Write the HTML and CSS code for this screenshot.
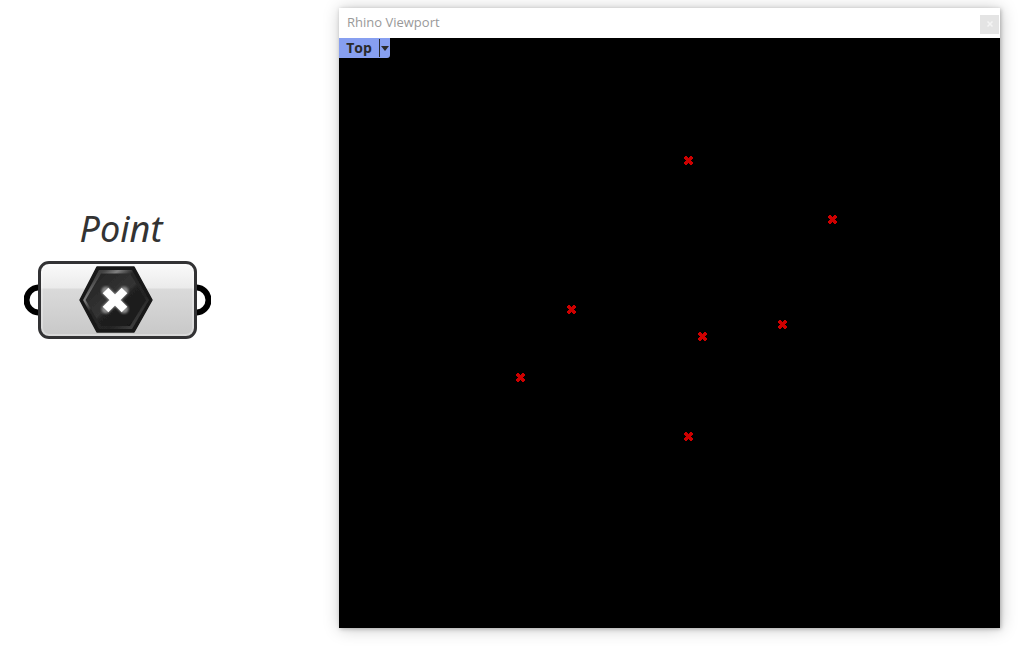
FILE: index.html
```html
<!DOCTYPE html>
<html lang="en">
<head>
<meta charset="utf-8">
<meta name="viewport" content="width=device-width, initial-scale=1">
<title>Point</title>
<link rel="stylesheet" href="styles.css">
</head>
<body>
<main class="workspace">
  <section class="component">
    <h1 class="component-name">Point</h1>
    <div class="component-body">
      <svg class="port" viewBox="0 0 14 32" aria-hidden="true"><path d="M15 3.500A12.500 12.500 0 0 0 15 28.500" fill="none" stroke="#000" stroke-width="6"/></svg>
      <div class="capsule">
        <svg class="hex" viewBox="0 0 74 68" aria-hidden="true">
          <defs>
            <linearGradient id="rim" x1="0" y1="0" x2="1" y2="1">
              <stop offset="0" stop-color="#333"/>
              <stop offset=".17" stop-color="#444"/>
              <stop offset=".27" stop-color="#808080"/>
              <stop offset=".4" stop-color="#262626"/>
              <stop offset=".7" stop-color="#242424"/>
              <stop offset=".88" stop-color="#404040"/>
              <stop offset="1" stop-color="#222"/>
            </linearGradient>
            <linearGradient id="face" x1="0" y1="0" x2="1" y2="1">
              <stop offset="0" stop-color="#222"/>
              <stop offset=".5" stop-color="#343434"/>
              <stop offset=".56" stop-color="#202020"/>
              <stop offset="1" stop-color="#161616"/>
            </linearGradient>
            <filter id="soft" x="-20%" y="-20%" width="140%" height="140%">
              <feGaussianBlur stdDeviation=".7"/>
            </filter>
            <filter id="glow" x="-30%" y="-30%" width="160%" height="160%">
              <feGaussianBlur stdDeviation="1.2"/>
            </filter>
          </defs>
          <path d="M18 1H55L73 34L55 66H18L1 34Z" fill="#181818" stroke="#181818" stroke-width="1.5" stroke-linejoin="round"/>
          <g filter="url(#soft)">
            <path d="M20 4H53L70 34L53 63H20L4 34Z" fill="url(#rim)"/>
            <path d="M22 7.500H51L67 34L51 60H22L6.500 34Z" fill="url(#face)"/>
          </g>
          <path d="M27 25L45 43M45 25L27 43" stroke="#888" stroke-width="9" stroke-linecap="round" filter="url(#glow)"/>
          <path d="M26.500 24.500L45.500 43.500M45.500 24.500L26.500 43.500" stroke="#fff" stroke-width="8" filter="url(#soft)"/>
        </svg>
      </div>
      <svg class="port" viewBox="0 0 14 32" aria-hidden="true"><path d="M-1 3.500A12.500 12.500 0 0 1 -1 28.500" fill="none" stroke="#000" stroke-width="6"/></svg>
    </div>
  </section>
  <section class="window">
    <header class="titlebar">
      <h2 class="window-title">Rhino Viewport</h2>
      <button class="close" type="button" aria-label="Close">
        <svg class="close-icon" viewBox="0 0 6 6" aria-hidden="true"><path d="M.5 .5L5.500 5.500M5.500 .5L.5 5.500" stroke="#f4f4f4" stroke-width="1.500"/></svg>
      </button>
    </header>
    <div class="viewport">
      <svg class="points" viewBox="0 0 661 590" role="img" aria-label="Points in the top view">
        <defs>
          <path id="mark" d="M-3-4h2v1h1v1h1v-1h1v-1h2v1h1v2h-1v1h-1v1h1v1h1v2h-1v1h-2v-1h-1v-1h-1v1h-1v1h-2v-1h-1v-2h1v-1h1v-1h-1v-1h-1v-2h1z"/>
        </defs>
        <g fill="#ce0000">
          <use href="#mark" x="349" y="122"/>
          <use href="#mark" x="493" y="181"/>
          <use href="#mark" x="232" y="271"/>
          <use href="#mark" x="443" y="286"/>
          <use href="#mark" x="363" y="298"/>
          <use href="#mark" x="181" y="339"/>
          <use href="#mark" x="349" y="398"/>
        </g>
      </svg>
      <div class="view-label">
        <button class="view-name" type="button">Top</button>
        <button class="view-menu" type="button" aria-label="Viewport menu">
          <svg class="arrow" viewBox="0 0 8 5" aria-hidden="true"><path d="M0 0H8L4 5Z" fill="#2a2a2a"/></svg>
        </button>
      </div>
    </div>
  </section>
</main>
</body>
</html>
```
FILE: styles.css
```css
* {
  box-sizing: border-box;
}

body {
  margin: 0;
  background: #fff;
  font-family: "Open Sans", "Noto Sans", sans-serif;
}

.workspace {
  display: grid;
  grid-template-columns: 339fr 661fr;
  min-height: 100vh;
  padding: 8px 18px 21px 0;
}

.component {
  display: flex;
  flex-direction: column;
  align-items: flex-start;
  justify-content: center;
  padding: 0 0 92px 24px;
}

.component-name {
  width: 188px;
  margin: 0 0 8px;
  padding-left: 6px;
  color: #333;
  font-family: "Noto Sans", "Open Sans", sans-serif;
  font-size: 36px;
  font-style: italic;
  font-weight: 400;
  line-height: 48px;
  text-align: center;
}

.component-body {
  display: flex;
  align-items: center;
}

.port {
  width: 14px;
  height: 32px;
}

.capsule {
  display: flex;
  align-items: center;
  justify-content: center;
  width: 159px;
  height: 78px;
  padding-right: 3px;
  border: 3px solid #323234;
  border-radius: 11px;
  background: linear-gradient(#fafafa, #ebebeb 33%, #dadada 35%, #c8c8c8);
  box-shadow: inset 0 0 0 2px rgba(255, 255, 255, 0.3);
}

.hex {
  width: 74px;
  height: 68px;
}

.window {
  align-self: start;
  background: #fff;
  box-shadow: 1px 1px 4px rgba(0, 0, 0, 0.25), 1px 1px 16px rgba(0, 0, 0, 0.22);
}

.titlebar {
  display: flex;
  align-items: center;
  justify-content: space-between;
  height: 30px;
  padding: 0 1px 0 8px;
}

.window-title {
  margin: 0 0 2px;
  color: #999;
  font-size: 13px;
  font-weight: 400;
}

.close {
  display: grid;
  place-items: center;
  width: 19px;
  height: 19px;
  margin-top: 2px;
  padding: 0;
  border: 0;
  background: #e4e4e4;
}

.close-icon {
  width: 6px;
  height: 6px;
}

.viewport {
  position: relative;
  background: #000;
}

.points {
  display: block;
  width: 100%;
  height: auto;
}

.view-label {
  position: absolute;
  top: 0;
  left: 0;
  display: flex;
  height: 20px;
  border-radius: 0 0 3px 0;
  background: #879ff0;
}

.view-name,
.view-menu {
  padding: 0;
  border: 0;
  background: none;
  color: #2a2a2a;
}

.view-name {
  width: 40px;
  font: 700 14px/20px "Open Sans", "Noto Sans", sans-serif;
}

.view-menu {
  display: flex;
  align-items: center;
  width: 11px;
  height: 18px;
  margin-top: 1px;
  padding-left: 1px;
  border-left: 1px solid #2a2a2a;
}

.arrow {
  width: 8px;
  height: 5px;
}
```
